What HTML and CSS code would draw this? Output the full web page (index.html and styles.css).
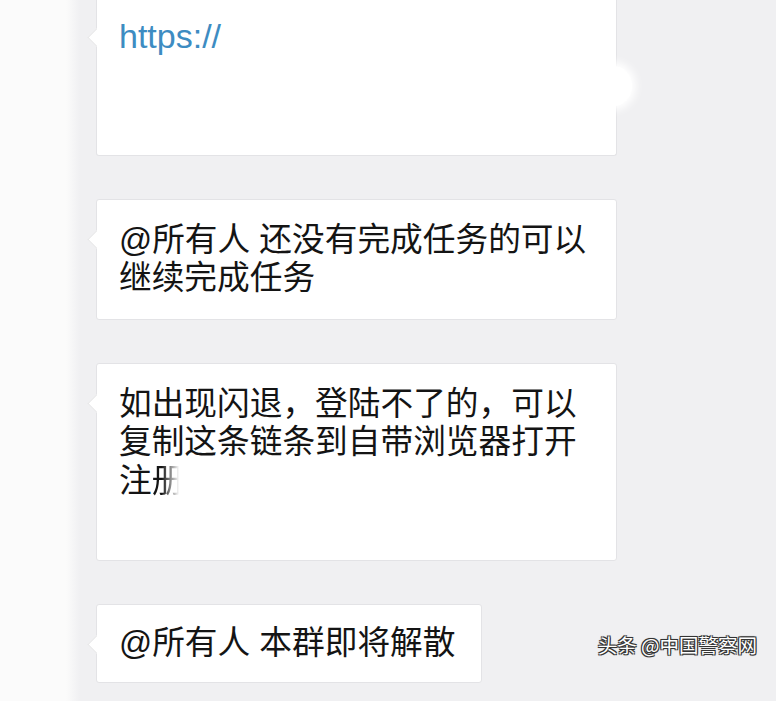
FILE: index.html
```html
<!DOCTYPE html>
<html lang="zh-CN">
<head>
  <meta charset="UTF-8">
  <meta name="viewport" content="width=device-width, initial-scale=1.0">
  <title>群聊消息</title>
  <link rel="stylesheet" href="styles.css">
</head>
<body>

  <div class="chat">
    <!-- 第一条：链接（后半部分被打码） -->
    <div class="bubble bubble-first">
      <span class="link">https://</span><br>
      <span class="blank">&nbsp;</span><br>
      <span class="blank">&nbsp;</span>
      <span class="smudge"></span>
    </div>

    <div class="bubble">
      @所有人 还没有完成任务的可以<br>
      继续完成任务
    </div>

    <div class="bubble">
      如出现闪退，登陆不了的，可以<br>
      复制这条链条到自带浏览器打开<br>
      注<span class="fade">册</span><br>
      <span class="blank">&nbsp;</span>
    </div>

    <div class="bubble bubble-short">
      @所有人 本群即将解散
    </div>
  </div>

  <div class="watermark">头条 @中国警察网</div>

</body>
</html>
```

FILE: styles.css
```css
body {
  margin: 0;
  height: 701px;
  overflow: hidden;
  font-family: "Liberation Sans", "Noto Sans CJK SC", sans-serif;
  background: linear-gradient(90deg, #fbfbfb 0, #fbfbfb 66px, #f0f0f2 80px, #f0f0f2 100%);
  position: relative;
}
.chat {
  display: flex;
  flex-direction: column;
  align-items: flex-start;
  gap: 43px;
  padding-left: 96px;
  margin-top: -4px;
}
.bubble {
  position: relative;
  box-sizing: border-box;
  width: 521px;
  padding: 21px 22px;
  background-color: white;
  border: 1px solid #e3e3e6;
  border-radius: 3px;
  font-size: 32.7px;
  line-height: 38.5px;
  color: #141414;
}
.bubble::before {
  content: "";
  position: absolute;
  left: -7px;
  top: 33px;
  width: 12px;
  height: 12px;
  background-color: white;
  border-left: 1px solid #e6e6e8;
  border-bottom: 1px solid #e6e6e8;
  transform: rotate(45deg);
}
.bubble-first {
  border-top: none;
  border-radius: 0 0 3px 3px;
}
.bubble-first::before {
  top: 35px;
}
.bubble-short {
  width: auto;
  padding: 19px 26px 20px 22px;
}
.link {
  font-size: 34px;
  color: #3d8cc2;
}
.blank {
  color: transparent;
}
.smudge {
  position: absolute;
  right: -16px;
  top: 70px;
  width: 36px;
  height: 40px;
  background-color: white;
  border-radius: 50%;
  box-shadow: 0 0 8px 4px white;
}
.fade {
  background: linear-gradient(90deg, #141414 30%, rgba(20, 20, 20, 0) 85%);
  -webkit-background-clip: text;
  background-clip: text;
  color: transparent;
}
.watermark {
  position: absolute;
  right: 19px;
  top: 632px;
  font-family: "Noto Sans CJK SC", sans-serif;
  font-size: 19.5px;
  line-height: 26px;
  color: white;
  text-shadow: -1px -1px 0 #333, 1px -1px 0 #333, -1px 1px 0 #333, 1px 1px 0 #333, 0 0 2px #000;
}
```
